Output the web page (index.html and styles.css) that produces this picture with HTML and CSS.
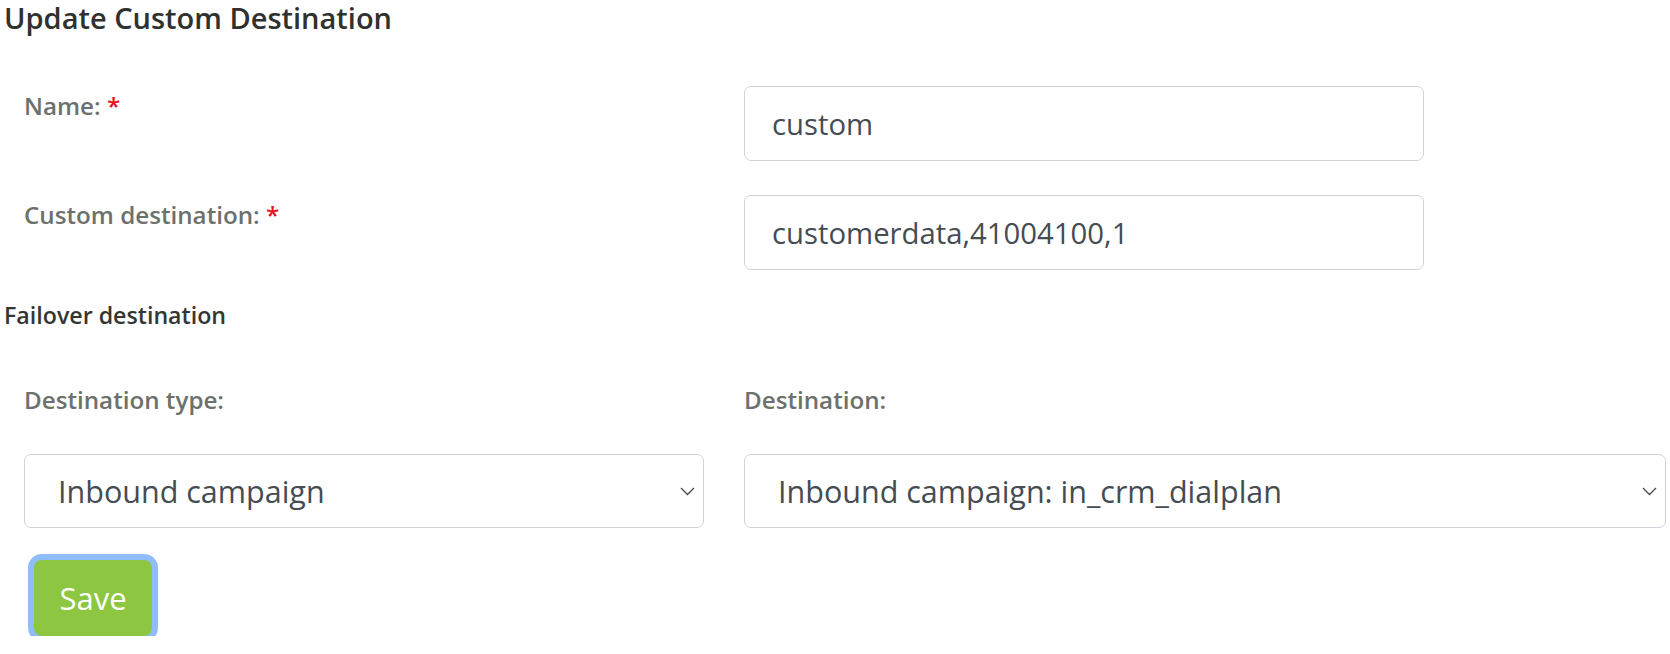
FILE: index.html
```html
<!DOCTYPE html>
<html lang="en">
<head>
<meta charset="utf-8">
<title>Update Custom Destination</title>
<link rel="stylesheet" href="styles.css">
</head>
<body>
<div class="page">
  <h1 class="title">Update Custom Destination</h1>

  <div class="row row-first">
    <div class="col"><label class="label" for="name">Name: <span class="req">*</span></label></div>
    <div class="col"><input class="input" id="name" type="text" value="custom"></div>
  </div>

  <div class="row row-second">
    <div class="col"><label class="label" for="cd">Custom destination: <span class="req">*</span></label></div>
    <div class="col"><input class="input" id="cd" type="text" value="customerdata,41004100,1"></div>
  </div>

  <h2 class="section">Failover destination</h2>

  <div class="row row-wide row-labels">
    <div class="col"><label class="label" for="dt">Destination type:</label></div>
    <div class="col col-wide"><label class="label" for="dd">Destination:</label></div>
  </div>

  <div class="row row-wide row-selects">
    <div class="col">
      <div class="select-wrap">
        <select class="select" id="dt"><option>Inbound campaign</option></select>
        <svg class="chev" width="15" height="9" viewBox="0 0 15 9"><path d="M1 1 L7.5 7.5 L14 1" fill="none" stroke="#444a50" stroke-width="1.3"/></svg>
      </div>
    </div>
    <div class="col col-wide">
      <div class="select-wrap">
        <select class="select" id="dd"><option>Inbound campaign: in_crm_dialplan</option></select>
        <svg class="chev" width="15" height="9" viewBox="0 0 15 9"><path d="M1 1 L7.5 7.5 L14 1" fill="none" stroke="#444a50" stroke-width="1.3"/></svg>
      </div>
    </div>
  </div>

  <div class="actions">
    <button class="btn" type="button">Save</button>
  </div>
</div>
</body>
</html>
```

FILE: styles.css
```css
html, body {
  margin: 0;
  padding: 0;
  background: #ffffff;
}

body {
  font-family: "Open Sans", "Liberation Sans", sans-serif;
  color: #333;
}

.page {
  padding-left: 4px;
}

.title {
  margin: 0;
  font-size: 29px;
  line-height: 36px;
  font-weight: 600;
  color: #2f312f;
}

.row {
  display: grid;
  grid-template-columns: 720px 720px;
}

.row-wide {
  grid-template-columns: 720px 946px;
}

.col {
  padding: 0 20px;
}

.col-wide {
  padding: 0 4px 0 20px;
}

.row-first {
  margin-top: 50px;
}

.row-second {
  margin-top: 34px;
}

.label {
  display: block;
  padding-top: 2px;
  font-size: 24.2px;
  line-height: 36px;
  font-weight: 600;
  color: #6c716c;
}

.req {
  color: #e8101a;
}

.input {
  display: block;
  box-sizing: border-box;
  width: 100%;
  height: 75px;
  margin: 0;
  padding: 0 27px;
  border: 1.5px solid #ced3d8;
  border-radius: 7px;
  background: #fff;
  font-family: "Open Sans", "Liberation Sans", sans-serif;
  font-size: 29.3px;
  color: #454c52;
  outline: none;
}

.section {
  margin: 30px 0 0;
  font-size: 23.2px;
  line-height: 30px;
  font-weight: 600;
  color: #343634;
}

.row-labels {
  margin-top: 50px;
}

.row-selects {
  margin-top: 36px;
}

.select-wrap {
  position: relative;
}

.select {
  display: block;
  box-sizing: border-box;
  width: 100%;
  height: 74px;
  margin: 0;
  padding: 0 40px 0 33px;
  border: 1.5px solid #ced3d8;
  border-radius: 7px;
  background: #fff;
  -webkit-appearance: none;
  appearance: none;
  font-family: "Open Sans", "Liberation Sans", sans-serif;
  font-size: 30.5px;
  color: #454c52;
  outline: none;
}

.chev {
  position: absolute;
  right: 9px;
  top: 33px;
  pointer-events: none;
}

.actions {
  margin-top: 32px;
  padding-left: 30px;
}

.btn {
  box-sizing: border-box;
  width: 118px;
  height: 76px;
  margin: 0;
  padding: 0;
  border: none;
  border-radius: 8px;
  background: #8dc640;
  color: #ffffff;
  font-family: "Open Sans", "Liberation Sans", sans-serif;
  font-size: 31px;
  font-weight: 400;
  box-shadow: 0 0 0 6px #8ebdf9;
  cursor: pointer;
}
```
